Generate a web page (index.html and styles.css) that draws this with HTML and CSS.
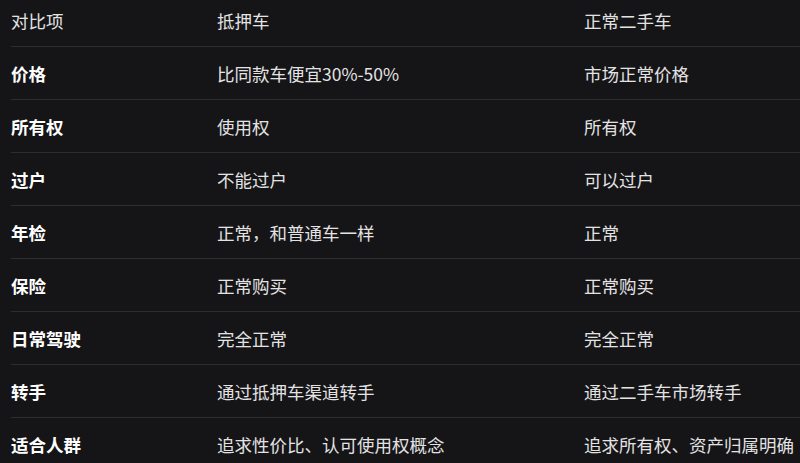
FILE: index.html
```html
<!DOCTYPE html>
<html lang="zh-CN">
<head>
  <meta charset="UTF-8">
  <title>抵押车与正常二手车对比</title>
  <link rel="stylesheet" href="styles.css">
</head>
<body>
  <table class="compare">
    <thead>
      <tr>
        <th>对比项</th>
        <th>抵押车</th>
        <th>正常二手车</th>
      </tr>
    </thead>
    <tbody>
      <tr><td>价格</td><td>比同款车便宜30%-50%</td><td>市场正常价格</td></tr>
      <tr><td>所有权</td><td>使用权</td><td>所有权</td></tr>
      <tr><td>过户</td><td>不能过户</td><td>可以过户</td></tr>
      <tr><td>年检</td><td>正常，和普通车一样</td><td>正常</td></tr>
      <tr><td>保险</td><td>正常购买</td><td>正常购买</td></tr>
      <tr><td>日常驾驶</td><td>完全正常</td><td>完全正常</td></tr>
      <tr><td>转手</td><td>通过抵押车渠道转手</td><td>通过二手车市场转手</td></tr>
      <tr><td>适合人群</td><td>追求性价比、认可使用权概念</td><td>追求所有权、资产归属明确</td></tr>
    </tbody>
  </table>
</body>
</html>
```

FILE: styles.css
```css
html, body {
  margin: 0;
  padding: 0;
  background-color: #151417;
  overflow: hidden;
}
body {
  font-family: "Noto Sans CJK SC", "Noto Sans", sans-serif;
  color: #e3e3e3;
  font-size: 17.5px;
  padding-left: 11px;
}
.compare {
  border-collapse: collapse;
  width: 789px;
  margin-top: -6px;
  table-layout: fixed;
}
.compare th, .compare td {
  height: 52px;
  padding: 0;
  text-align: left;
  vertical-align: middle;
  font-weight: normal;
  white-space: nowrap;
}
.compare th:nth-child(1), .compare td:nth-child(1) {
  width: 206px;
}
.compare th:nth-child(2), .compare td:nth-child(2) {
  width: 367px;
}
.compare tbody tr {
  border-top: 1px solid #2d2d30;
}
.compare td:first-child {
  font-weight: bold;
  color: #ffffff;
}
```
